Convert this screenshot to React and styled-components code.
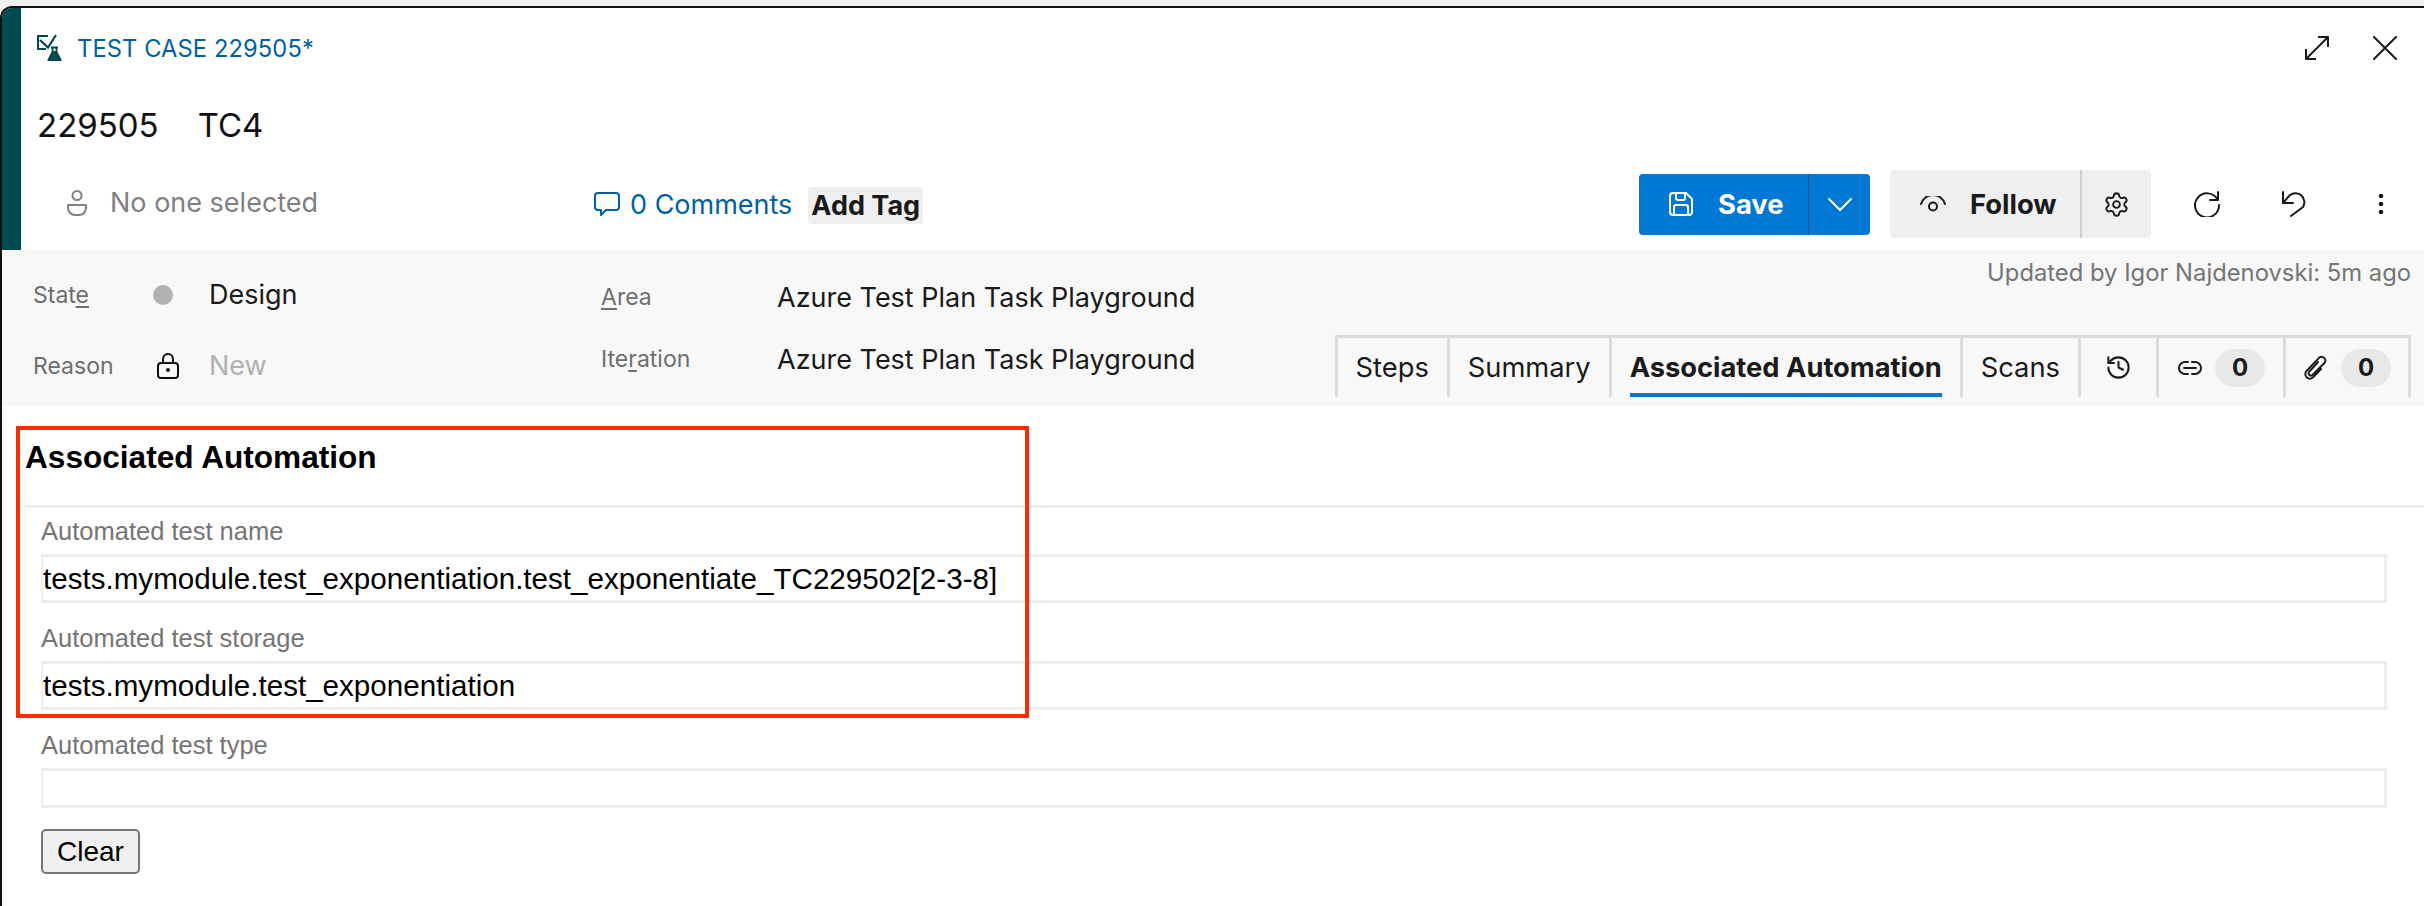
import React from 'react';
import styled, { createGlobalStyle } from 'styled-components';
import { Settings, History } from 'lucide-react';

const GlobalStyle = createGlobalStyle`
    html, body {
        margin: 0;
        padding: 0;
        background: #ffffff;
    }
    body {
        font-family: "Inter", "Liberation Sans", sans-serif;
        color: #1a1a1a;
        overflow: hidden;
    }
    * {
        box-sizing: border-box;
    }
`

const Page = styled.div`
    position: relative;
    width: 2424px;
    height: 906px;
    padding-top: 6px;
    background: #f0f0f0;
    overflow: hidden;
`

const Window = styled.div`
    height: 900px;
    background: #ffffff;
    border-top: 2px solid #111111;
    border-left: 2px solid #111111;
    border-top-left-radius: 12px;
    overflow: hidden;
`

const Header = styled.header`
    height: 242px;
    border-left: 19px solid #004b50;
    padding-left: 16px;
    display: grid;
    grid-template-rows: 80px 74px 88px;
`

const TitleBar = styled.div`
    display: flex;
    align-items: center;
    padding-right: 5px;
`

const TypeLabel = styled.span`
    margin-left: 14px;
    font-size: 23.7px;
    color: #0060a6;
    letter-spacing: 0.1px;
`

const WindowButton = styled.span`
    width: 68px;
    display: flex;
    justify-content: center;
    color: #1a1a1a;
    margin-left: ${props => props.$auto ? 'auto' : '0'};
`

const TitleRow = styled.div`
    display: flex;
    align-items: center;
    gap: 39px;
    font-size: 33px;
    color: #111111;
`

const MetaRow = styled.div`
    display: flex;
    align-items: center;
    padding-bottom: 4px;
`

const Assignee = styled.div`
    flex: 0 0 557px;
    padding: 0 0 3px 29px;
    display: flex;
    align-items: center;
    gap: 22px;
    font-size: 27px;
    color: #808080;
`

const CommentsLink = styled.a`
    display: flex;
    align-items: center;
    gap: 10px;
    font-size: 27px;
    color: #0060a6;
`

const AddTag = styled.span`
    margin: 2px 0 0 16px;
    height: 37px;
    padding: 0 3px;
    display: flex;
    align-items: center;
    background: #efefef;
    border-radius: 4px;
    font-size: 27px;
    font-weight: 700;
`

const Actions = styled.div`
    margin-left: auto;
    display: flex;
    align-items: center;
`

const SaveButton = styled.div`
    width: 231px;
    height: 61px;
    margin-right: 20px;
    display: flex;
    background: #0078d4;
    border-radius: 4px;
    color: #ffffff;
    font-size: 27.4px;
    font-weight: 700;
`

const SaveMain = styled.span`
    width: 170px;
    padding-left: 30px;
    display: flex;
    align-items: center;
    gap: 25px;
    border-right: 1px solid #005a9e;
`

const SaveChevron = styled.span`
    flex: 1;
    display: flex;
    align-items: center;
    justify-content: center;
`

const FollowButton = styled.div`
    width: 261px;
    height: 68px;
    margin-right: 12px;
    display: flex;
    background: #efefef;
    border-radius: 4px;
    font-size: 27.4px;
    font-weight: 700;
    color: #1a1a1a;
`

const FollowMain = styled.span`
    width: 192px;
    padding-left: 30px;
    display: flex;
    align-items: center;
    gap: 24px;
    border-right: 2px solid #cfcfcf;
`

const FollowSettings = styled.span`
    flex: 1;
    display: flex;
    align-items: center;
    justify-content: center;
`

const ToolButton = styled.span`
    width: 87px;
    display: flex;
    justify-content: center;
    color: #1a1a1a;
`

const Band = styled.section`
    height: 156px;
    display: flex;
    background: #f8f8f8;
`

const StateColumn = styled.div`
    flex: 0 0 599px;
    padding: 9px 0 0 31px;
`

const StateRow = styled.div`
    height: 71px;
    display: grid;
    grid-template-columns: 120px 56px 1fr;
    align-items: center;
`

const FieldLabel = styled.span`
    font-size: 23px;
    color: #6e6e6e;

    u {
        text-underline-offset: 3px;
    }
`

const StateDot = styled.span`
    width: 20px;
    height: 20px;
    border-radius: 50%;
    background: #b2b2b2;
`

const LockSlot = styled.span`
    padding-left: 4px;
    color: #111111;
`

const StateValue = styled.span`
    font-size: 27px;
    color: ${props => props.$muted ? '#b0b0b0' : '#1a1a1a'};
`

const AreaColumn = styled.div`
    padding-top: 16px;
`

const AreaRow = styled.div`
    height: 62px;
    display: grid;
    grid-template-columns: 176px auto;
    align-items: center;
`

const AreaValue = styled.span`
    font-size: 27px;
    color: #1a1a1a;
`

const RightColumn = styled.div`
    margin-left: auto;
    padding: 8px 13px 9px 0;
    display: flex;
    flex-direction: column;
    align-items: flex-end;
    justify-content: space-between;
`

const UpdatedBy = styled.span`
    font-size: 23.8px;
    line-height: 30px;
    color: #757575;
`

const Tabs = styled.nav`
    height: 62px;
    display: flex;
    border-top: 3px solid #dcdcdc;
    border-right: 3px solid #dcdcdc;
`

const Tab = styled.div`
    padding: 0 ${props => props.$pad || 18}px;
    display: flex;
    border-left: 3px solid #dcdcdc;
`

const TabLabel = styled.span`
    display: flex;
    align-items: center;
    gap: 12px;
    padding-top: 4px;
    font-size: 27.3px;
    font-weight: ${props => props.$active ? 700 : 400};
    color: #1a1a1a;
    border-bottom: 4px solid ${props => props.$active ? '#0078d4' : 'transparent'};
`

const CountBadge = styled.span`
    width: 50px;
    height: 38px;
    display: flex;
    align-items: center;
    justify-content: center;
    border-radius: 19px;
    background: #e8e8e8;
    font-size: 24px;
    font-weight: 700;
`

const Content = styled.main`
    font-family: "Liberation Sans", Arial, sans-serif;
`

const SectionHead = styled.div`
    height: 102px;
    margin-left: 23px;
    padding-top: 33px;
    border-bottom: 3px solid #ececec;
`

const SectionTitle = styled.h2`
    margin: 0;
    font-size: 31.6px;
    line-height: 36px;
    font-weight: 700;
    color: #000000;
`

const FieldList = styled.div`
    padding: 8px 37px 0 39px;
`

const Field = styled.div`
    margin-bottom: 20px;
`

const FormLabel = styled.div`
    height: 30px;
    margin-bottom: 8px;
    font-size: 25.5px;
    line-height: 30px;
    color: #757575;
`

const FormValue = styled.div`
    height: ${props => props.$empty ? '40px' : '49px'};
    display: flex;
    align-items: center;
    border: 3px solid #ededed;
    border-left-width: 2px;
    font-size: 29.6px;
    color: #000000;
    white-space: nowrap;
`

const ClearButton = styled.button`
    display: block;
    width: 99px;
    height: 45px;
    margin-top: 21px;
    padding: 0;
    background: #efefef;
    border: 2px solid #767676;
    border-radius: 5px;
    font-family: inherit;
    font-size: 28px;
    color: #000000;
`

// Cadre rouge d'annotation posé sur la capture
const Highlight = styled.div`
    position: absolute;
    left: 16px;
    top: 426px;
    width: 1013px;
    height: 292px;
    border: 4px solid #fb2d00;
    pointer-events: none;
`

const Icon = ({ size = 26, height, stroke = 1.8, children }) => (
    <svg
        width={ size }
        height={ height || size }
        viewBox={ `0 0 ${size} ${height || size}` }
        fill="none"
        stroke="currentColor"
        strokeWidth={ stroke }
        strokeLinecap="round"
        strokeLinejoin="round"
        style={{ flex: 'none', display: 'block' }}
    >
        { children }
    </svg>
)

const TestCaseIcon = () => (
    <svg width="26" height="28" viewBox="0 0 26 28" fill="none" style={{ flex: 'none', display: 'block' }}>
        <path d="M11 2H1v13h8" stroke="#004b50" strokeWidth="2.2" />
        <path d="M3 6l8 7.5L19 1" stroke="#004b50" strokeWidth="2.2" />
        <path d="M14 13.5h7M15.5 13.5v5M19.5 13.5v5" stroke="#004b50" strokeWidth="1.8" />
        <path d="M15 17h5l4.5 8.5a1 1 0 0 1-1 1.5H11.5a1 1 0 0 1-1-1.5z" fill="#004b50" />
    </svg>
)

const ExpandIcon = () => (
    <Icon size={ 26 } stroke={ 2 }>
        <path d="M2 24L24 2M14 2h10v10M2 14v10h10" strokeLinecap="butt" />
    </Icon>
)

const CloseIcon = () => (
    <Icon size={ 24 } stroke={ 2 }>
        <path d="M1 1l22 22M23 1L1 23" />
    </Icon>
)

const PersonIcon = () => (
    <Icon size={ 22 } height={ 26 } stroke={ 2 }>
        <circle cx="11" cy="5.5" r="4.5" />
        <path d="M2 15h18v3a7 7 0 0 1-7 7H9a7 7 0 0 1-7-7z" />
    </Icon>
)

const CommentIcon = () => (
    <Icon size={ 26 } height={ 24 } stroke={ 2 }>
        <path d="M4 1h18a3 3 0 0 1 3 3v11a3 3 0 0 1-3 3H12l-5 5v-5H4a3 3 0 0 1-3-3V4a3 3 0 0 1 3-3z" />
    </Icon>
)

const SaveIcon = () => (
    <Icon size={ 24 } stroke={ 2 }>
        <path d="M4 1h13l6 6v13a3 3 0 0 1-3 3H4a3 3 0 0 1-3-3V4a3 3 0 0 1 3-3z" />
        <path d="M7 1v5a2 2 0 0 0 2 2h5a2 2 0 0 0 2-2V1M5 23v-8a2 2 0 0 1 2-2h10a2 2 0 0 1 2 2v8" />
    </Icon>
)

const ChevronIcon = () => (
    <Icon size={ 24 } height={ 13 } stroke={ 2 }>
        <path d="M1 1l11 11L23 1" />
    </Icon>
)

const EyeIcon = () => (
    <Icon size={ 26 } height={ 16 } stroke={ 2 }>
        <path d="M1 8a12.5 12.5 0 0 1 24 0" />
        <circle cx="13" cy="10.5" r="4" />
    </Icon>
)

const RefreshIcon = () => (
    <Icon size={ 26 } stroke={ 2 }>
        <path d="M23.5 8.5A12 12 0 1 0 25 14" />
        <path d="M24 1v8h-8" />
    </Icon>
)

const UndoIcon = () => (
    <Icon size={ 26 } stroke={ 2 }>
        <path d="M2 12L9 4a9 9 0 0 1 13 12L10 25" />
        <path d="M2 1v11h10" />
    </Icon>
)

const DotsIcon = () => (
    <svg width="6" height="22" viewBox="0 0 6 22" fill="#1a1a1a" style={{ display: 'block' }}>
        <circle cx="3" cy="3" r="2.3" />
        <circle cx="3" cy="11" r="2.3" />
        <circle cx="3" cy="19" r="2.3" />
    </svg>
)

const LockIcon = () => (
    <Icon size={ 22 } height={ 26 } stroke={ 2 }>
        <rect x="1" y="10" width="20" height="15" rx="3" />
        <path d="M6 10V6a5 5 0 0 1 10 0v4" />
        <circle cx="11" cy="17" r="1" fill="currentColor" />
    </Icon>
)

const LinkIcon = () => (
    <Icon size={ 26 } height={ 16 } stroke={ 2 }>
        <path d="M11 2H8a6 6 0 0 0 0 12h3M15 2h3a6 6 0 0 1 0 12h-3M7 8h12" />
    </Icon>
)

const ClipIcon = () => (
    <Icon size={ 26 } stroke={ 1.9 }>
        <path d="M15 7L6 17a2.3 2.3 0 0 0 3.4 3L21.5 8a3.8 3.8 0 0 0-5.5-5.2L3.5 16a4.6 4.6 0 0 0 6.8 6.2L18 14" />
    </Icon>
)

const App = () => (
    <Page>
        <GlobalStyle />
        <Window>
            <Header>
                <TitleBar>
                    <TestCaseIcon />
                    <TypeLabel>TEST CASE 229505*</TypeLabel>
                    <WindowButton $auto><ExpandIcon /></WindowButton>
                    <WindowButton><CloseIcon /></WindowButton>
                </TitleBar>
                <TitleRow>
                    <span>229505</span>
                    <span>TC4</span>
                </TitleRow>
                <MetaRow>
                    <Assignee>
                        <PersonIcon />
                        <span>No one selected</span>
                    </Assignee>
                    <CommentsLink>
                        <CommentIcon />
                        <span>0 Comments</span>
                    </CommentsLink>
                    <AddTag>Add Tag</AddTag>
                    <Actions>
                        <SaveButton>
                            <SaveMain><SaveIcon /><span>Save</span></SaveMain>
                            <SaveChevron><ChevronIcon /></SaveChevron>
                        </SaveButton>
                        <FollowButton>
                            <FollowMain><EyeIcon /><span>Follow</span></FollowMain>
                            <FollowSettings><Settings size={ 27 } strokeWidth={ 1.7 } /></FollowSettings>
                        </FollowButton>
                        <ToolButton><RefreshIcon /></ToolButton>
                        <ToolButton><UndoIcon /></ToolButton>
                        <ToolButton><DotsIcon /></ToolButton>
                    </Actions>
                </MetaRow>
            </Header>

            <Band>
                <StateColumn>
                    <StateRow>
                        <FieldLabel>Stat<u>e</u></FieldLabel>
                        <StateDot />
                        <StateValue>Design</StateValue>
                    </StateRow>
                    <StateRow>
                        <FieldLabel>Reason</FieldLabel>
                        <LockSlot><LockIcon /></LockSlot>
                        <StateValue $muted>New</StateValue>
                    </StateRow>
                </StateColumn>
                <AreaColumn>
                    <AreaRow>
                        <FieldLabel><u>A</u>rea</FieldLabel>
                        <AreaValue>Azure Test Plan Task Playground</AreaValue>
                    </AreaRow>
                    <AreaRow>
                        <FieldLabel>Ite<u>r</u>ation</FieldLabel>
                        <AreaValue>Azure Test Plan Task Playground</AreaValue>
                    </AreaRow>
                </AreaColumn>
                <RightColumn>
                    <UpdatedBy>Updated by Igor Najdenovski: 5m ago</UpdatedBy>
                    <Tabs>
                        <Tab><TabLabel>Steps</TabLabel></Tab>
                        <Tab><TabLabel>Summary</TabLabel></Tab>
                        <Tab><TabLabel $active>Associated Automation</TabLabel></Tab>
                        <Tab><TabLabel>Scans</TabLabel></Tab>
                        <Tab $pad={ 24 }><TabLabel><History size={ 27 } strokeWidth={ 1.8 } /></TabLabel></Tab>
                        <Tab $pad={ 18 }><TabLabel><LinkIcon /><CountBadge>0</CountBadge></TabLabel></Tab>
                        <Tab $pad={ 17 }><TabLabel><ClipIcon /><CountBadge>0</CountBadge></TabLabel></Tab>
                    </Tabs>
                </RightColumn>
            </Band>

            <Content>
                <SectionHead>
                    <SectionTitle>Associated Automation</SectionTitle>
                </SectionHead>
                <FieldList>
                    <Field>
                        <FormLabel>Automated test name</FormLabel>
                        <FormValue>tests.mymodule.test_exponentiation.test_exponentiate_TC229502[2-3-8]</FormValue>
                    </Field>
                    <Field>
                        <FormLabel>Automated test storage</FormLabel>
                        <FormValue>tests.mymodule.test_exponentiation</FormValue>
                    </Field>
                    <Field>
                        <FormLabel>Automated test type</FormLabel>
                        <FormValue $empty />
                    </Field>
                    <ClearButton>Clear</ClearButton>
                </FieldList>
            </Content>
        </Window>
        <Highlight />
    </Page>
)

export default App;
